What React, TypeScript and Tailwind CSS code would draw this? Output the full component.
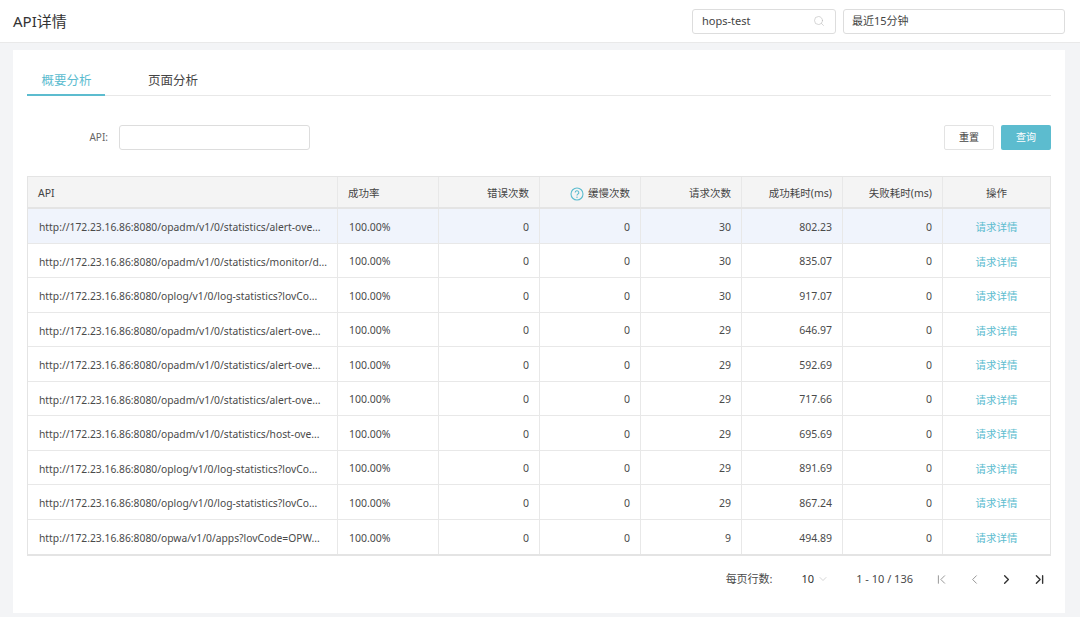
import { ChevronDown, ChevronLeft, ChevronRight, ChevronFirst, ChevronLast, Search } from "lucide-react";

const font = "font-['Noto_Sans','Noto_Sans_CJK_SC',sans-serif]";

const rows = [
  ["http://172.23.16.86:8080/opadm/v1/0/statistics/alert-ove...", "30", "802.23"],
  ["http://172.23.16.86:8080/opadm/v1/0/statistics/monitor/d...", "30", "835.07"],
  ["http://172.23.16.86:8080/oplog/v1/0/log-statistics?lovCo...", "30", "917.07"],
  ["http://172.23.16.86:8080/opadm/v1/0/statistics/alert-ove...", "29", "646.97"],
  ["http://172.23.16.86:8080/opadm/v1/0/statistics/alert-ove...", "29", "592.69"],
  ["http://172.23.16.86:8080/opadm/v1/0/statistics/alert-ove...", "29", "717.66"],
  ["http://172.23.16.86:8080/opadm/v1/0/statistics/host-ove...", "29", "695.69"],
  ["http://172.23.16.86:8080/oplog/v1/0/log-statistics?lovCo...", "29", "891.69"],
  ["http://172.23.16.86:8080/oplog/v1/0/log-statistics?lovCo...", "29", "867.24"],
  ["http://172.23.16.86:8080/opwa/v1/0/apps?lovCode=OPW...", "9", "494.89"],
];

const gridCols = "grid grid-cols-[310px_101px_101px_101px_101px_101px_100px_1fr]";
const cell = "flex items-center px-2.5 pt-1 border-r border-[#e8e8e8] last:border-r-0";

function HelpIcon() {
  return (
    <svg width="14" height="14" viewBox="0 0 14 14" fill="none" className="mr-1 -ml-px shrink-0">
      <circle cx="7" cy="7" r="6" stroke="#5cbccf" strokeWidth="1.1" />
      <path d="M5.2 5.6a1.8 1.8 0 1 1 2.7 1.5c-.6.4-.9.7-.9 1.4" stroke="#5cbccf" strokeWidth="1.1" fill="none" />
      <circle cx="7" cy="10.2" r=".7" fill="#5cbccf" />
    </svg>
  );
}

export default function App() {
  return (
    <div className={`${font} w-[1080px] h-[617px] overflow-hidden bg-[#f3f4f6] text-[#4a4a4a]`}>
      {/* Header */}
      <div className="h-[43px] bg-white border-b border-[#e9e9e9] flex items-center justify-between pl-[13px] pr-[15px]">
        <h1 className="text-[15px] font-normal text-[#333]">API详情</h1>
        <div className="flex items-center gap-[7px]">
          <div className="w-[144px] h-[25px] border border-[#ddd] rounded-[3px] flex items-center justify-between pl-[9px] pr-[10px] text-[11px] text-[#444]">
            hops-test
            <Search size={12} strokeWidth={1.2} className="text-[#bbb]" />
          </div>
          <div className="w-[222px] h-[25px] border border-[#ddd] rounded-[3px] flex items-center px-2 text-[11px] text-[#444]">
            最近15分钟
          </div>
        </div>
      </div>

      {/* Card */}
      <div className="mt-[7px] ml-[13px] w-[1052px] h-[563px] bg-white px-[14px] pt-[19px]">
        <div className="flex h-[27px] border-b border-[#e8e8e8] text-[12.5px] pt-[3px]">
          <div className="w-[78px] h-[24px] border-b-2 border-[#5cbccf] text-[#5cbccf] text-center pl-px">概要分析</div>
          <div className="ml-[43px] text-[#444]">页面分析</div>
        </div>

        <div className="mt-[29px] flex items-center justify-between h-[25px]">
          <div className="flex items-center">
            <span className="w-[81px] text-right text-[10px] text-[#666]">API:</span>
            <div className="ml-[11px] w-[191px] h-[25px] border border-[#ddd] rounded-[3px]" />
          </div>
          <div className="flex items-center gap-[7px] text-[10px]">
            <div className="w-[50px] h-[25px] border border-[#e3e3e3] rounded-[2px] flex items-center justify-center text-[#444]">重置</div>
            <div className="w-[50px] h-[25px] bg-[#5cbccf] rounded-[2px] flex items-center justify-center text-white">查询</div>
          </div>
        </div>

        {/* Table */}
        <div className="mt-[26px] w-[1024px] border border-[#e4e4e4] border-b-2 text-[10.5px]">
          <div className={`${gridCols} h-[32px] bg-[#f4f4f4] border-b-2 border-[#e4e4e4] text-[#444]`}>
            <div className={cell}>API</div>
            <div className={cell}>成功率</div>
            <div className={`${cell} justify-end`}>错误次数</div>
            <div className={`${cell} justify-end`}><HelpIcon />缓慢次数</div>
            <div className={`${cell} justify-end`}>请求次数</div>
            <div className={`${cell} justify-end`}>成功耗时(ms)</div>
            <div className={`${cell} justify-end`}>失败耗时(ms)</div>
            <div className={`${cell} justify-center`}>操作</div>
          </div>
          {rows.map((row, i) => (
            <div
              key={i}
              className={`${gridCols} h-[34.5px] border-b border-[#e8e8e8] last:border-b-0 ${i === 0 ? "bg-[#f0f4fc]" : "bg-white"}`}
            >
              <div className={`${cell} pl-[11px] whitespace-nowrap overflow-hidden text-[10.3px]`}>{row[0]}</div>
              <div className={`${cell} pl-[11px]`}>100.00%</div>
              <div className={`${cell} justify-end`}>0</div>
              <div className={`${cell} justify-end`}>0</div>
              <div className={`${cell} justify-end`}>{row[1]}</div>
              <div className={`${cell} justify-end`}>{row[2]}</div>
              <div className={`${cell} justify-end`}>0</div>
              <div className={`${cell} justify-center text-[#5cbccf] pt-[5px]`}>请求详情</div>
            </div>
          ))}
        </div>

        {/* Pagination */}
        <div className="mt-[13px] flex items-center justify-end text-[11px] h-[20px] pr-[4px]">
          <span>每页行数:</span>
          <span className="ml-[29px] text-[#333]">10</span>
          <ChevronDown size={12} strokeWidth={1} className="ml-[3px] text-[#aaa]" />
          <span className="ml-[27px]">1 - 10 / 136</span>
          <ChevronFirst size={15} strokeWidth={1.4} className="ml-[21px] text-[#888]" />
          <ChevronLeft size={15} strokeWidth={1.4} className="ml-[18px] text-[#888]" />
          <ChevronRight size={15} strokeWidth={2.2} className="ml-[17px] text-[#333]" />
          <ChevronLast size={15} strokeWidth={2.2} className="ml-[18px] text-[#333]" />
        </div>
      </div>
    </div>
  );
}
